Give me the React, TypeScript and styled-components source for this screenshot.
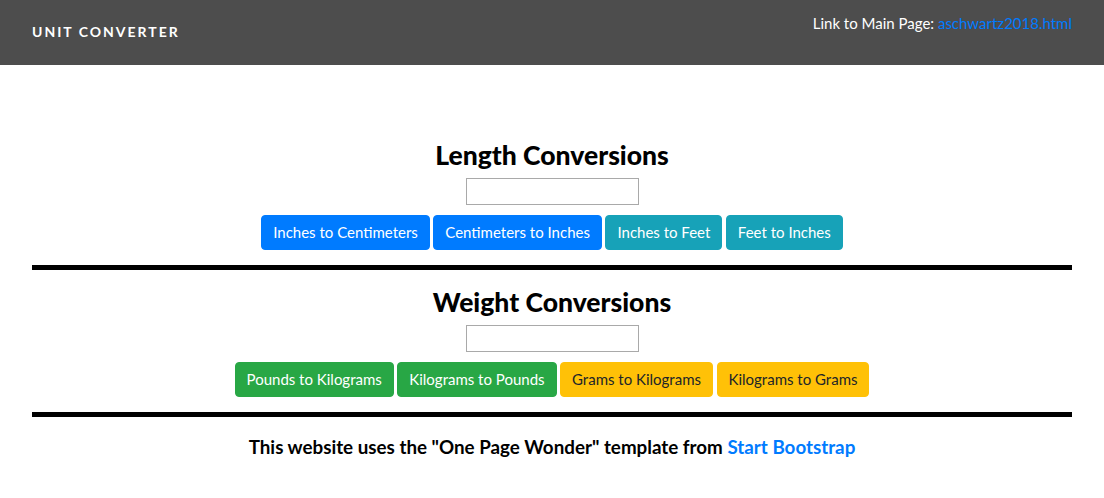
import React from "react";
import styled, { createGlobalStyle } from "styled-components";

const GlobalStyle = createGlobalStyle`
  html, body { margin: 0; padding: 0; background: #fff; }
  body { font-family: Lato, "Open Sans", sans-serif; color: #212529; }
`;

const NavBar = styled.nav`
  height: 65px;
  background: #4d4d4d;
  display: flex;
  justify-content: space-between;
  align-items: flex-start;
  padding: 0 32px;
  box-sizing: border-box;
`;

const Brand = styled.div`
  margin-top: 22px;
  color: #fff;
  font-family: Lato, sans-serif;
  font-weight: 700;
  font-size: 14px;
  line-height: 19px;
  letter-spacing: 2px;
  text-transform: uppercase;
`;

const NavLinkText = styled.div`
  margin-top: 12px;
  color: #fff;
  font-family: Lato, sans-serif;
  font-size: 15px;
  line-height: 22px;
`;

const Link = styled.a`
  color: #007bff;
  text-decoration: none;
`;

const Main = styled.main`
  padding-top: 75px;
  display: flex;
  flex-direction: column;
  align-items: stretch;
`;

const Section = styled.section`
  display: flex;
  flex-direction: column;
  align-items: center;
`;

const Heading = styled.h2`
  margin: 0;
  font-family: Lato, sans-serif;
  font-weight: 900;
  font-size: 26.5px;
  line-height: 31px;
  color: #000;
`;

const Field = styled.input`
  margin-top: 7px;
  width: 173px;
  height: 27px;
  box-sizing: border-box;
  border: 1px solid #a9a9a9;
  padding: 0 4px;
  font-family: Lato, sans-serif;
  font-size: 14px;
`;

const ButtonRow = styled.div`
  margin-top: 10px;
  display: flex;
  gap: 3.5px;
`;

const variants: Record<string, { bg: string; fg: string }> = {
  primary: { bg: "#007bff", fg: "#fff" },
  info: { bg: "#17a2b8", fg: "#fff" },
  success: { bg: "#28a745", fg: "#fff" },
  warning: { bg: "#ffc107", fg: "#212529" },
};

const Button = styled.button<{ $variant: string }>`
  background: ${(p) => variants[p.$variant].bg};
  border: 1px solid ${(p) => variants[p.$variant].bg};
  color: ${(p) => variants[p.$variant].fg};
  font-family: Lato, sans-serif;
  font-size: 15px;
  line-height: 21px;
  padding: 6px 11px;
  border-radius: 4px;
  cursor: pointer;
`;

const Divider = styled.hr`
  margin: 15px 32px 17px;
  border: 0;
  height: 5px;
  background: #000;
`;

const Footer = styled.p`
  margin: 0;
  text-align: center;
  font-family: Lato, sans-serif;
  font-weight: 700;
  font-size: 18.8px;
  line-height: 26px;
  color: #000;
`;

const FooterLink = styled.a`
  color: #007bff;
  text-decoration: none;
`;

type Btn = { label: string; variant: string };

const length: Btn[] = [
  { label: "Inches to Centimeters", variant: "primary" },
  { label: "Centimeters to Inches", variant: "primary" },
  { label: "Inches to Feet", variant: "info" },
  { label: "Feet to Inches", variant: "info" },
];

const weight: Btn[] = [
  { label: "Pounds to Kilograms", variant: "success" },
  { label: "Kilograms to Pounds", variant: "success" },
  { label: "Grams to Kilograms", variant: "warning" },
  { label: "Kilograms to Grams", variant: "warning" },
];

function Converter({ title, buttons }: { title: string; buttons: Btn[] }) {
  return (
    <Section>
      <Heading>{title}</Heading>
      <Field type="text" />
      <ButtonRow>
        {buttons.map((b) => (
          <Button key={b.label} $variant={b.variant}>
            {b.label}
          </Button>
        ))}
      </ButtonRow>
    </Section>
  );
}

export default function App() {
  return (
    <>
      <GlobalStyle />
      <NavBar>
        <Brand>Unit Converter</Brand>
        <NavLinkText>
          Link to Main Page: <Link href="#">aschwartz2018.html</Link>
        </NavLinkText>
      </NavBar>
      <Main>
        <Converter title="Length Conversions" buttons={length} />
        <Divider />
        <Converter title="Weight Conversions" buttons={weight} />
        <Divider />
        <Footer>
          This website uses the "One Page Wonder" template from{" "}
          <FooterLink href="#">Start Bootstrap</FooterLink>
        </Footer>
      </Main>
    </>
  );
}
